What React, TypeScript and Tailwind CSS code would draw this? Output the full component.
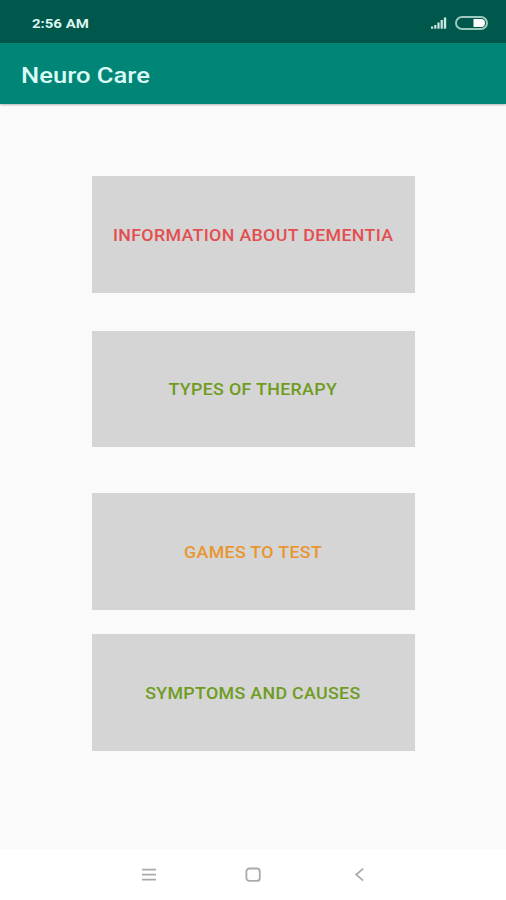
import React from "react";

interface MenuButtonProps {
  text: string;
  className: string;
}

const MenuButton: React.FC<MenuButtonProps> = ({ text, className }) => (
  <button
    className={`w-[323px] shrink-0 bg-[#d5d5d5] flex items-center justify-center pt-[2px] text-base leading-none font-medium tracking-[0.3px] whitespace-nowrap ${className}`}
  >
    <span className="scale-x-[1.112]">{text}</span>
  </button>
);

function StatusBar() {
  return (
    <div className="h-[43px] shrink-0 bg-[#00574b] flex items-center justify-between pl-8 pr-[18px] pt-[3px] text-[#dcf5ef]">
      <span className="text-[13px] font-bold leading-none origin-left scale-x-[1.15]">
        2:56 AM
      </span>
      <div className="flex items-center gap-2">
        <svg width="16" height="12" viewBox="0 0 16 12" fill="#c9e8e0">
          <rect x="0" y="9.5" width="2.2" height="2.2" />
          <rect x="3.2" y="8" width="2.2" height="3.7" />
          <rect x="6.4" y="5.5" width="2.2" height="6.2" />
          <rect x="9.6" y="3" width="2.2" height="8.7" />
          <rect x="12.8" y="0.5" width="2.4" height="11.2" />
        </svg>
        <svg width="33" height="14" viewBox="0 0 33 14">
          <rect
            x="1"
            y="1"
            width="31"
            height="12"
            rx="6"
            fill="none"
            stroke="#9cc9bd"
            strokeWidth="2"
          />
          <path d="M18.5 3h7.5a4 4 0 0 1 0 8h-7.5z" fill="#fff" />
        </svg>
      </div>
    </div>
  );
}

function NavigationBar() {
  return (
    <div className="h-[51px] shrink-0 bg-white flex items-center pl-[141px] gap-[88px]">
      <svg width="16" height="16" viewBox="0 0 16 16" stroke="#aaa" strokeWidth="1.6">
        <path d="M1 2.6h14M1 7.6h14M1 12.6h14" />
      </svg>
      <svg width="16" height="16" viewBox="0 0 16 16" fill="none" stroke="#aaa" strokeWidth="1.8">
        <rect x="1.4" y="1.5" width="13.4" height="12.4" rx="3" />
      </svg>
      <svg
        className="ml-[2px]"
        width="16"
        height="16"
        viewBox="0 0 16 16"
        fill="none"
        stroke="#aaa"
        strokeWidth="1.8"
      >
        <path d="M12.2 1.6L5.2 7.6L12.2 13.6" />
      </svg>
    </div>
  );
}

function App() {
  return (
    <div className="w-full h-screen flex flex-col overflow-hidden bg-[#fafafa] font-['Roboto',sans-serif]">
      <StatusBar />
      <header className="h-[61px] shrink-0 bg-[#008577] flex items-center pl-[21px] pt-[5px] shadow-[0_1px_2px_rgba(0,0,0,0.28)]">
        <h1 className="text-[22px] leading-none font-medium text-[#dcfaf5] whitespace-nowrap origin-left scale-x-[1.165]">
          Neuro Care
        </h1>
      </header>
      <main className="grow flex flex-col items-center pt-[72px]">
        <MenuButton
          text="INFORMATION ABOUT DEMENTIA"
          className="h-[117px] text-[#e34f50]"
        />
        <MenuButton
          text="TYPES OF THERAPY"
          className="h-[116px] mt-[38px] text-[#6f9c1f]"
        />
        <MenuButton
          text="GAMES TO TEST"
          className="h-[117px] mt-[46px] text-[#e8962f]"
        />
        <MenuButton
          text="SYMPTOMS AND CAUSES"
          className="h-[117px] mt-6 text-[#6f9c1f]"
        />
      </main>
      <NavigationBar />
    </div>
  );
}

export default App;
